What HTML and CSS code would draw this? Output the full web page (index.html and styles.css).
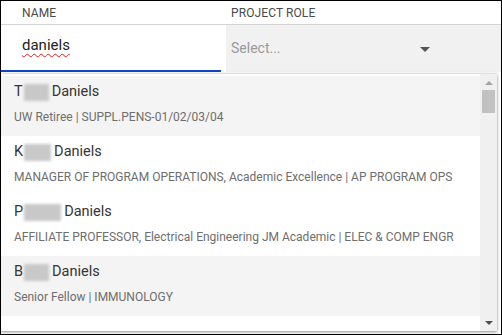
FILE: index.html
```html
<!DOCTYPE html>
<html>
<head>
<meta charset="utf-8">
<link rel="stylesheet" href="styles.css">
</head>
<body>
<div class="frame">
  <div class="head">
    <div class="hcol name-col">NAME</div>
    <div class="hcol role-col">PROJECT ROLE</div>
  </div>
  <div class="fields">
    <div class="input"><span class="typed">daniels</span></div>
    <div class="gapcell"></div>
    <div class="select">
      <span class="placeholder">Select...</span>
      <svg class="caret" width="10" height="5" viewBox="0 0 10 5"><path d="M0 0 L10 0 L5 5 Z" fill="#555"/></svg>
    </div>
  </div>
  <div class="dropdown">
    <div class="list">
      <div class="item active">
        <div class="pname">T<span class="blur b1"></span>Daniels</div>
        <div class="desc">UW Retiree | SUPPL.PENS-01/02/03/04</div>
      </div>
      <div class="item">
        <div class="pname">K<span class="blur b2"></span>Daniels</div>
        <div class="desc">MANAGER OF PROGRAM OPERATIONS, Academic Excellence | AP PROGRAM OPS</div>
      </div>
      <div class="item">
        <div class="pname">P<span class="blur b3"></span>Daniels</div>
        <div class="desc">AFFILIATE PROFESSOR, Electrical Engineering JM Academic | ELEC &amp; COMP ENGR</div>
      </div>
      <div class="item active">
        <div class="pname">B<span class="blur b4"></span>Daniels</div>
        <div class="desc">Senior Fellow | IMMUNOLOGY</div>
      </div>
      <div class="item"></div>
    </div>
    <div class="scrollbar">
      <svg class="arrow" width="8" height="4" viewBox="0 0 8 4"><path d="M0 4 L8 4 L4 0 Z" fill="#a3a3a3"/></svg>
      <div class="thumb"></div>
      <div class="track"></div>
      <svg class="arrow" width="8" height="4" viewBox="0 0 8 4"><path d="M0 0 L8 0 L4 4 Z" fill="#505050"/></svg>
    </div>
  </div>
</div>
</body>
</html>
```
FILE: styles.css
```css
* { box-sizing: border-box; }
html, body { margin: 0; padding: 0; }
body {
  font-family: Roboto, "Liberation Sans", Arial, sans-serif;
  background: #fff;
}
.frame {
  position: relative;
  width: 502px;
  height: 335px;
  border: 1px solid #000;
  overflow: hidden;
  background: #fff;
}
.head {
  display: flex;
  height: 24px;
  border-bottom: 1px solid #d4d4d4;
  align-items: center;
}
.hcol {
  font-size: 12px;
  color: #4a4a4a;
  letter-spacing: 0.1px;
}
.name-col { width: 225px; padding-left: 21px; }
.role-col { padding-left: 5px; }
.fields {
  display: flex;
  height: 47px;
}
.input {
  width: 220px;
  border-bottom: 2px solid #0a47c9;
  padding: 11px 0 0 21px;
  font-size: 15px;
  color: #222;
}
.typed {
  text-decoration: underline wavy #e02020;
  text-decoration-thickness: 1px;
  text-underline-offset: 3px;
}
.gapcell { width: 5px; }
.select {
  flex: 1;
  background: #f1f1f1;
  display: flex;
  align-items: center;
  padding: 0 0 0 5px;
}
.placeholder {
  font-size: 14px;
  color: #9a9a9a;
  width: 189px;
  margin-top: -1px;
}
.caret { margin-top: 1px; }
.dropdown {
  position: absolute;
  top: 73px;
  left: 0;
  width: 496px;
  height: 257px;
  background: #fff;
  display: flex;
  box-shadow: 0 1px 3px rgba(0,0,0,0.45), 0 -1px 2px rgba(0,0,0,0.08);
}
.list {
  flex: 1;
  overflow: hidden;
  padding-top: 2px;
}
.item {
  height: 60px;
  padding: 6px 0 0 13px;
}
.item.active { background: #f4f4f4; }
.pname {
  font-size: 14.5px;
  color: #353535;
  height: 20px;
  line-height: 20px;
  display: flex;
  align-items: center;
}
.blur {
  display: inline-block;
  height: 17px;
  background: #c8c8c8;
  filter: blur(1.5px);
  margin: 0 3px 0 1px;
}
.b1 { width: 25px; }
.b2 { width: 27px; }
.b3 { width: 37px; }
.b4 { width: 25px; }
.desc {
  margin-top: 7px;
  font-size: 12px;
  color: #6e6e6e;
  line-height: 16px;
  white-space: nowrap;
}
.scrollbar {
  width: 17px;
  background: #f0f0f0;
  display: flex;
  flex-direction: column;
  align-items: center;
  padding: 7px 0 6px;
}
.arrow { flex: none; }
.thumb {
  width: 13px;
  height: 23px;
  background: #c1c1c1;
  margin-top: 5px;
}
.track { flex: 1; }
```
